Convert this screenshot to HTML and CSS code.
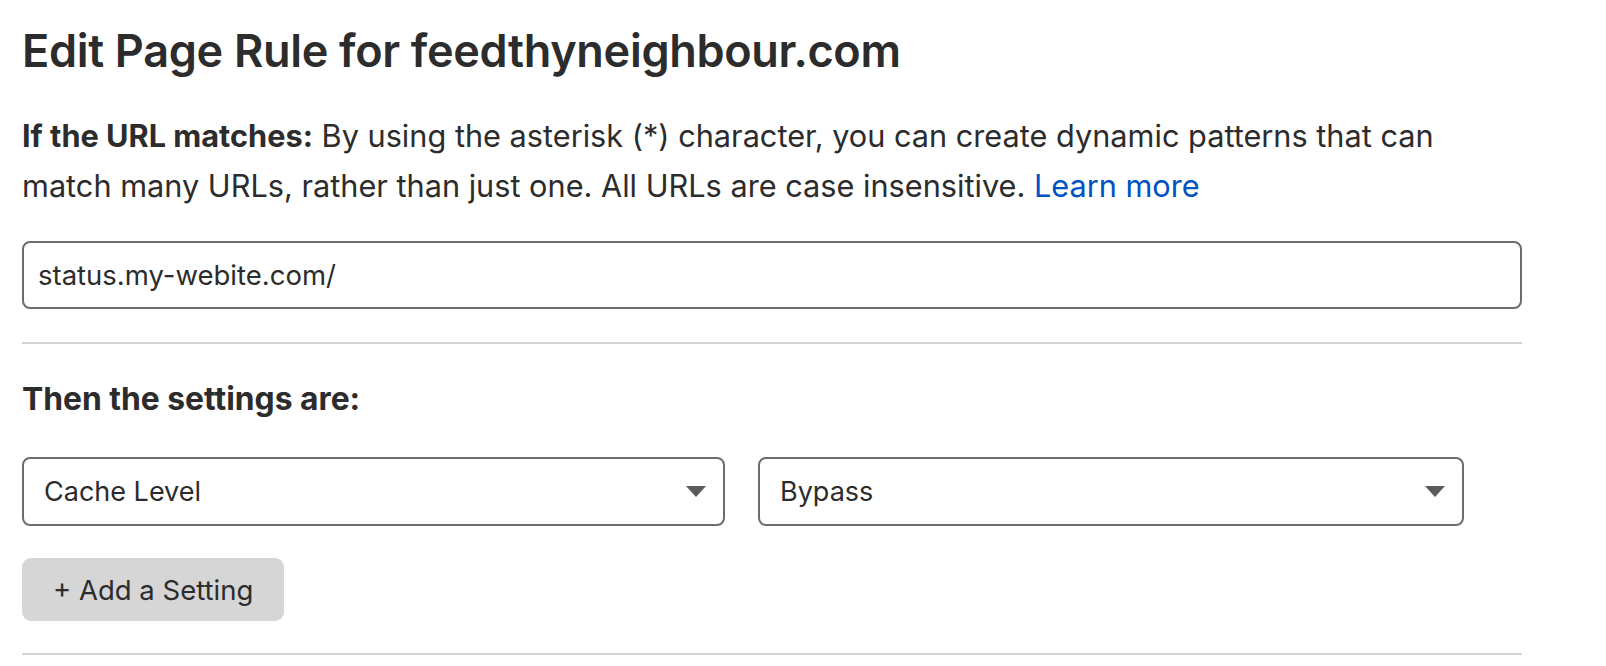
FILE: index.html
```html
<!DOCTYPE html>
<html lang="en">
<head>
<meta charset="utf-8">
<title>Edit Page Rule</title>
<link rel="stylesheet" href="styles.css">
</head>
<body>
<main class="page">
  <h1 class="title">Edit Page Rule for feedthyneighbour.com</h1>
  <p class="intro"><strong>If the URL matches:</strong> By using the asterisk (*) character, you can create dynamic patterns that can match many URLs, rather than just one. All URLs are case insensitive. <a class="link" href="#">Learn more</a></p>
  <div class="field">status.my-webite.com/</div>
  <hr class="divider">
  <h2 class="subtitle">Then the settings are:</h2>
  <div class="selects">
    <div class="select"><span>Cache Level</span><span class="caret"></span></div>
    <div class="select select-wide"><span>Bypass</span><span class="caret"></span></div>
  </div>
  <button class="add-btn" type="button">+ Add a Setting</button>
  <hr class="divider divider-bottom">
</main>
</body>
</html>
```

FILE: styles.css
```css
* { box-sizing: border-box; }
html, body { margin: 0; padding: 0; background: #fff; }
body {
  font-family: Inter, "Noto Sans", "Liberation Sans", sans-serif;
  color: #2c2c2c;
}
.page {
  width: 1522px;
  padding: 0 0 0 22px;
}
.title {
  margin: 0;
  padding-top: 24px;
  font-size: 45px;
  line-height: 54px;
  font-weight: 600;
  letter-spacing: -0.3px;
}
.intro {
  margin: 33px 0 0;
  font-size: 30.7px;
  line-height: 50px;
}
.intro strong { font-weight: 700; }
.link { color: #0051c3; text-decoration: none; }
.field {
  margin-top: 30px;
  height: 68px;
  border: 2px solid #6d6d6d;
  border-radius: 8px;
  padding: 0 14px;
  display: flex;
  align-items: center;
  font-size: 27.5px;
}
.divider {
  margin: 33px 0 0;
  border: 0;
  height: 2px;
  background: #d4d4d4;
}
.subtitle {
  margin: 35px 0 0;
  font-size: 31.8px;
  line-height: 40px;
  font-weight: 700;
}
.selects {
  display: flex;
  gap: 33px;
  margin-top: 38px;
}
.select {
  width: 703px;
  height: 69px;
  border: 2px solid #6d6d6d;
  border-radius: 8px;
  padding: 0 17px 0 20px;
  display: flex;
  align-items: center;
  justify-content: space-between;
  font-size: 27px;
}
.select-wide { width: 706px; }
.caret {
  width: 0;
  height: 0;
  border-left: 10px solid transparent;
  border-right: 10px solid transparent;
  border-top: 11px solid #5a5a5a;
}
.add-btn {
  display: block;
  margin-top: 32px;
  height: 63px;
  padding: 0 31px;
  border: 0;
  border-radius: 9px;
  background: #d6d6d6;
  font-family: inherit;
  font-size: 27.5px;
  color: #2c2c2c;
}
.divider-bottom { margin-top: 32px; }
```
